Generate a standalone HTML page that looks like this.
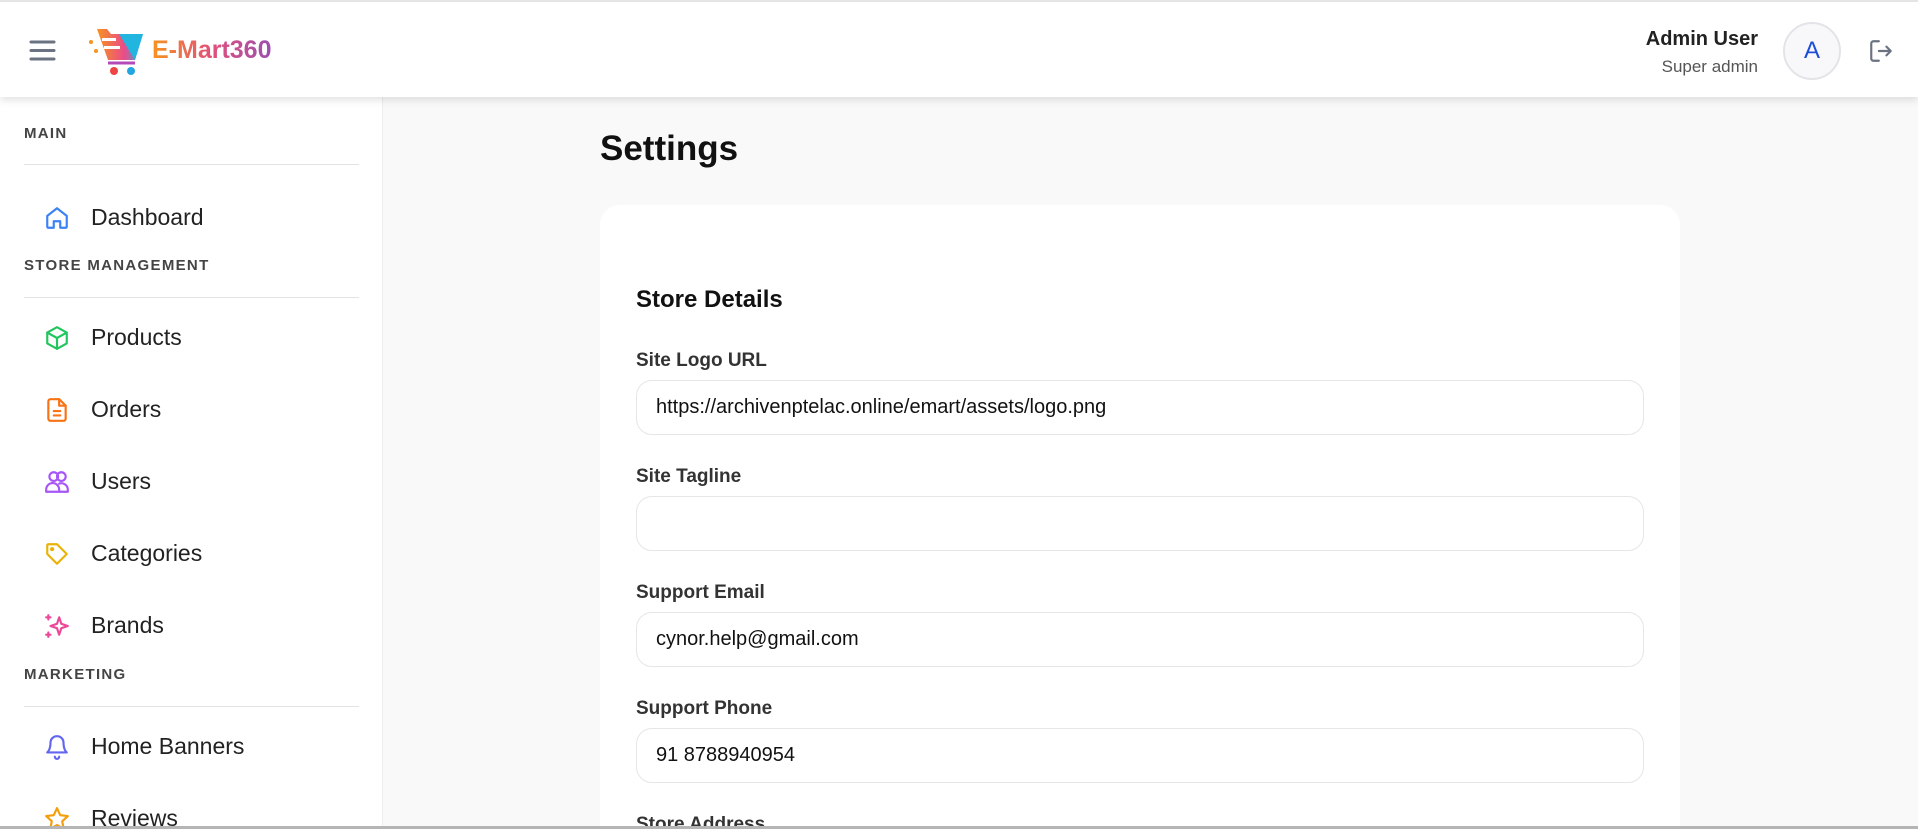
<!DOCTYPE html>
<html style="overflow:hidden;width:1918px;height:829px"><head><meta charset="utf-8"><style>
*{box-sizing:border-box;margin:0;padding:0}
body{width:1918px;height:829px;overflow:hidden;background:#f9f9f9;font-family:"Liberation Sans",sans-serif;color:#222;position:relative}
.hdr{position:absolute;left:0;top:0;width:1918px;height:97px;background:#fff;border-top:2px solid #e5e5e5;box-shadow:0 3px 8px rgba(0,0,0,.12);z-index:2}
.side{position:absolute;left:0;top:97px;width:383px;height:732px;background:#fff;border-right:1px solid #eee}
.sec{position:absolute;left:24px;font-size:15px;letter-spacing:1.3px;color:#444;font-weight:bold}
.div{position:absolute;left:24px;width:335px;height:1px;background:#e3e3e3}
.item{position:absolute;left:44px;font-size:23px;color:#222;display:flex;align-items:center}
.item svg{width:26px;height:26px;margin-right:21px;fill:none;stroke-width:2;stroke-linecap:round;stroke-linejoin:round}
.card{position:absolute;left:600px;top:205px;width:1080px;height:621px;background:#fff;border-radius:20px 20px 0 0}
.lbl{position:absolute;left:636px;font-size:19px;font-weight:bold;color:#333}
.inp{position:absolute;left:636px;width:1008px;height:55px;border:1.5px solid #e6e6e6;border-radius:16px;padding-left:19px;font-size:20px;line-height:52px;color:#111}
</style></head><body>
<div class="hdr">
 <svg style="position:absolute;left:29px;top:38px" width="27" height="21"><g stroke="#6b7280" stroke-width="3" stroke-linecap="round"><line x1="2" y1="2" x2="25" y2="2"/><line x1="2" y1="10.5" x2="25" y2="10.5"/><line x1="2" y1="19" x2="25" y2="19"/></g></svg>
 <svg style="position:absolute;left:89px;top:24px" width="58" height="50" viewBox="0 0 58 50">
  <defs><linearGradient id="g" x1="0" x2="1"><stop offset="0" stop-color="#f7931e"/><stop offset=".6" stop-color="#e94b8a"/><stop offset="1" stop-color="#22b5e0"/></linearGradient></defs>
  <circle cx="2" cy="16" r="2" fill="#f7931e"/><circle cx="7" cy="25" r="2" fill="#f7931e"/>
  <path d="M8 3h10l4 5h32l-8 26H19z" fill="url(#g)"/>
  <path d="M30 8h24l-8 26z" fill="#22b5e0"/>
  <rect x="13" y="12" width="14" height="3" fill="#fff"/><rect x="15" y="20" width="16" height="3" fill="#fff"/>
  <path d="M19 37h27" stroke="#b44ab8" stroke-width="3"/>
  <circle cx="25" cy="45" r="4" fill="#ef4444"/><circle cx="42" cy="45" r="4" fill="#22a5e0"/>
 </svg>
 <div style="position:absolute;left:152px;top:34px;font-size:25px;font-weight:bold;background:linear-gradient(90deg,#f7931e,#e0507a,#9b4fb0);-webkit-background-clip:text;color:transparent">E-Mart360</div>
 <div style="position:absolute;right:160px;top:26px;font-size:20px;font-weight:bold;color:#222;text-align:right">Admin User</div>
 <div style="position:absolute;right:160px;top:55px;font-size:17px;color:#555;text-align:right">Super admin</div>
 <div style="position:absolute;left:1783px;top:20px;width:58px;height:58px;border-radius:50%;background:#f8f8fa;border:2px solid #e3e4e8;color:#1d4ed8;font-size:24px;text-align:center;line-height:54px">A</div>
 <svg style="position:absolute;left:1868px;top:36px" width="26" height="26" viewBox="0 0 24 24" fill="none" stroke="#6b7280" stroke-width="2" stroke-linecap="round" stroke-linejoin="round"><path d="M10 3H5a2 2 0 0 0-2 2v14a2 2 0 0 0 2 2h5"/><path d="M10 12h11M17 8l4 4-4 4"/></svg>
</div>
<div class="side">
 <div class="sec" style="top:28px">MAIN</div><div class="div" style="top:67px"></div>
 <div class="item" style="top:107px"><svg viewBox="0 0 24 24" stroke="#3b82f6"><path d="M3 10l9-7 9 7v10a1 1 0 0 1-1 1h-5v-6h-6v6H4a1 1 0 0 1-1-1z"/></svg>Dashboard</div>
 <div class="sec" style="top:160px">STORE MANAGEMENT</div><div class="div" style="top:200px"></div>
 <div class="item" style="top:227px"><svg viewBox="0 0 24 24" stroke="#22c55e"><path d="M12 2l9 5v10l-9 5-9-5V7z"/><path d="M3 7l9 5 9-5M12 12v10"/></svg>Products</div>
 <div class="item" style="top:299px"><svg viewBox="0 0 24 24" stroke="#f97316"><path d="M14 2H6a2 2 0 0 0-2 2v16a2 2 0 0 0 2 2h12a2 2 0 0 0 2-2V8z"/><path d="M14 2v6h6M9 13h6M9 17h6"/></svg>Orders</div>
 <div class="item" style="top:371px"><svg viewBox="0 0 24 24" stroke="#a855f7"><circle cx="9" cy="7" r="4"/><circle cx="16" cy="7" r="4"/><path d="M2 21v-2a6 6 0 0 1 12 0v2zM14 21h8v-2a6 6 0 0 0-8-5.5"/></svg>Users</div>
 <div class="item" style="top:443px"><svg viewBox="0 0 24 24" stroke="#eab308"><path d="M3 4a1 1 0 0 1 1-1h8l9 9-9 9-9-9z"/><circle cx="7.5" cy="7.5" r="1"/></svg>Categories</div>
 <div class="item" style="top:515px"><svg viewBox="0 0 24 24" stroke="#ec4899"><path d="M14 4l2 6 6 2-6 2-2 6-2-6-6-2 6-2z"/><path d="M4 2v4M2 4h4M4 18v4M2 20h4"/></svg>Brands</div>
 <div class="sec" style="top:569px">MARKETING</div><div class="div" style="top:609px"></div>
 <div class="item" style="top:636px"><svg viewBox="0 0 24 24" stroke="#6366f1"><path d="M6 8a6 6 0 0 1 12 0c0 7 3 9 3 9H3s3-2 3-9"/><path d="M10 21a2 2 0 0 0 4 0"/></svg>Home Banners</div>
 <div class="item" style="top:708px"><svg viewBox="0 0 24 24" stroke="#f59e0b"><path d="M12 2l3 6.5 7 .8-5.2 4.8 1.4 7L12 17.6 5.8 21l1.4-7L2 9.3l7-.8z"/></svg>Reviews</div>
</div>
<div style="position:absolute;left:600px;top:129px;font-size:35px;font-weight:bold;color:#111">Settings</div>
<div class="card"></div>
<div style="position:absolute;left:636px;top:286px;font-size:24px;font-weight:bold;color:#111">Store Details</div>
<div class="lbl" style="top:350px">Site Logo URL</div>
<div class="inp" style="top:380px">https://archivenptelac.online/emart/assets/logo.png</div>
<div class="lbl" style="top:466px">Site Tagline</div>
<div class="inp" style="top:496px"></div>
<div class="lbl" style="top:582px">Support Email</div>
<div class="inp" style="top:612px">cynor.help@gmail.com</div>
<div class="lbl" style="top:698px">Support Phone</div>
<div class="inp" style="top:728px">91 8788940954</div>
<div style="position:absolute;left:636px;top:814px;height:12px;overflow:hidden"><div style="font-size:19px;font-weight:bold;color:#333">Store Address</div></div>
<div style="position:absolute;left:0;top:826px;width:1918px;height:3px;background:#b5b5b5"></div>
</body></html>
